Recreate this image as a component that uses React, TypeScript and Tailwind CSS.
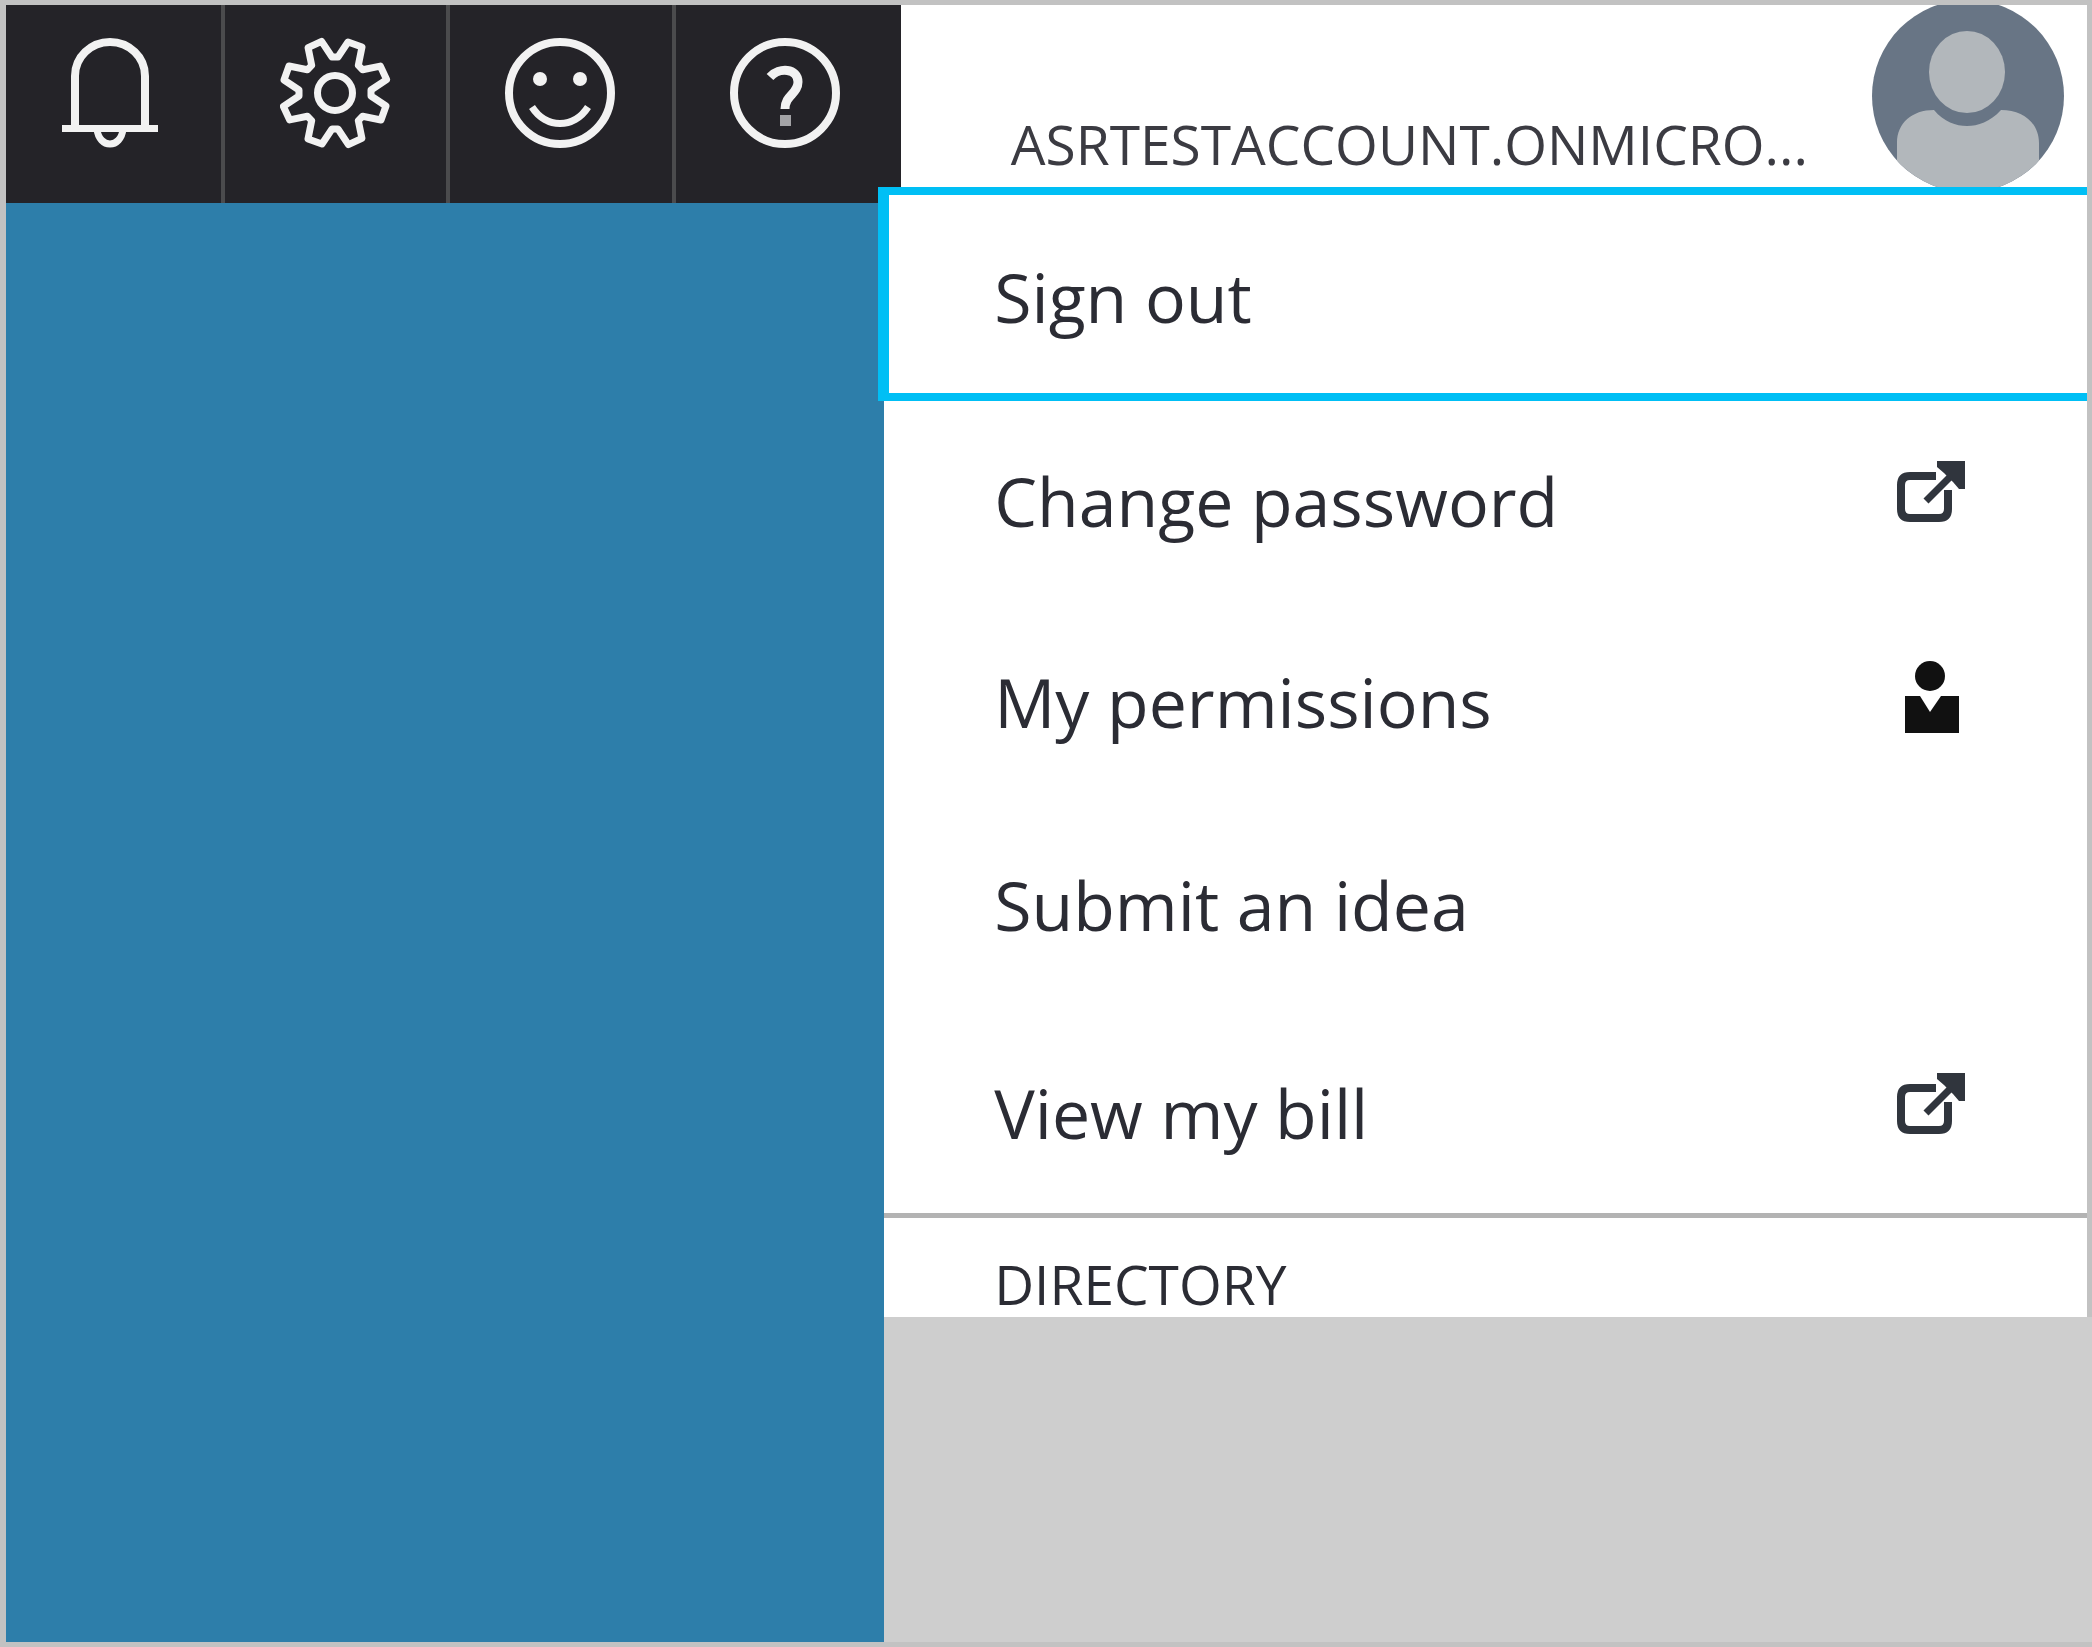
import type { ReactNode } from "react";

const GEAR_ANGLES = [0, 45, 90, 135, 180, 225, 270, 315];

// Outline of the eight-toothed gear: one notch and one tooth per 45° step.
const gearPath =
  GEAR_ANGLES.map((deg, i) => {
    const a = (deg * Math.PI) / 180;
    const points = [
      [-3, -36],
      [3, -36],
      [13, -51],
      [27, -46],
    ];
    return points
      .map(([x, y], j) => {
        const px = x * Math.cos(a) - y * Math.sin(a);
        const py = x * Math.sin(a) + y * Math.cos(a);
        return `${i === 0 && j === 0 ? "M" : "L"}${px.toFixed(1)} ${py.toFixed(1)}`;
      })
      .join(" ");
  }).join(" ") + " Z";

function TopIcon({ children }: { children: ReactNode }) {
  return (
    <svg
      viewBox="-55 -56 112 112"
      className="size-28"
      fill="none"
      stroke="currentColor"
      strokeLinejoin="round"
      aria-hidden="true"
    >
      {children}
    </svg>
  );
}

function BellIcon() {
  return (
    <TopIcon>
      <g transform="translate(-3 0)">
        <path d="M-35 34 V-17 A35 34 0 0 1 35 -17 V34" strokeWidth="8" />
        <path d="M-48 35.500 H48" strokeWidth="7" />
        <path d="M-13 36 C-11 56 11 56 13 36" strokeWidth="7" />
      </g>
    </TopIcon>
  );
}

function GearIcon() {
  return (
    <TopIcon>
      <path d={gearPath} strokeWidth="7" />
      <circle r="17.500" strokeWidth="7" />
    </TopIcon>
  );
}

function SmileIcon() {
  return (
    <TopIcon>
      <circle r="51" strokeWidth="8" />
      <circle cx="-20" cy="-14" r="7" fill="currentColor" stroke="none" />
      <circle cx="20" cy="-14" r="7" fill="currentColor" stroke="none" />
      <path d="M-28 14 C-14 36 14 36 28 14" strokeWidth="7" />
    </TopIcon>
  );
}

function HelpIcon() {
  return (
    <TopIcon>
      <circle r="51" strokeWidth="8" />
      <path d="M-15 -16 C-6 -26 13 -25 13 -11 C13 1 0 2 0 16" strokeWidth="9" />
      <rect x="-5" y="22" width="11" height="11" fill="#a3a3a6" stroke="none" />
    </TopIcon>
  );
}

function Avatar() {
  return (
    <svg viewBox="0 0 192 182" className="h-[182px] w-48 shrink-0" aria-hidden="true">
      <defs>
        <clipPath id="avatar-disc">
          <circle cx="96" cy="91" r="96" />
        </clipPath>
      </defs>
      <g clipPath="url(#avatar-disc)">
        <rect width="192" height="182" fill="#687585" />
        <path
          d="M25 182 V138 C25 118 40 105 62 105 C72 117 84 121 95 121 C106 121 118 117 129 105 C151 105 167 118 167 138 V182 Z"
          fill="#b2b7bb"
        />
        <ellipse cx="95" cy="67" rx="38" ry="41" fill="#b2b7bb" />
      </g>
    </svg>
  );
}

function ExternalIcon() {
  return (
    <svg viewBox="0 -3 72 88" className="h-22 w-18 shrink-0" fill="none" stroke="#30353d" aria-hidden="true">
      <path d="M41 16 H15 Q6 16 6 25 V49 Q6 58 15 58 H44 Q53 58 53 49 V30" strokeWidth="8" />
      <path d="M31 41 L62 10" strokeWidth="7" />
      <path d="M42 1 H70 V29 H64 L58 22 L49 13 L42 7 Z" fill="#30353d" stroke="none" />
    </svg>
  );
}

function PersonIcon() {
  return (
    <svg viewBox="0 -2 72 88" className="h-22 w-18 shrink-0" fill="#111111" aria-hidden="true">
      <circle cx="35" cy="16" r="15" />
      <path d="M10 36 H25 L35 52 L46 36 H64 V73 H10 Z" />
    </svg>
  );
}

const NAV = [
  { label: "Notifications", icon: <BellIcon /> },
  { label: "Settings", icon: <GearIcon /> },
  { label: "Feedback", icon: <SmileIcon /> },
  { label: "Help", icon: <HelpIcon /> },
];

const ITEMS = [
  { label: "Change password", icon: <ExternalIcon /> },
  { label: "My permissions", icon: <PersonIcon /> },
  { label: "Submit an idea", icon: null },
  { label: "View my bill", icon: <ExternalIcon /> },
];

export default function App() {
  return (
    <div className="flex min-h-screen flex-col border-[5px] border-l-[6px] border-[#c2c2c2] bg-white font-['Open_Sans',sans-serif] text-[#2b2c34]">
      <header className="flex h-[198px]">
        <nav className="grid flex-1 grid-cols-[219fr_225fr_225fr_225fr] bg-[#242328] text-[#f2f2f2]">
          {NAV.map((item) => (
            <button
              key={item.label}
              type="button"
              aria-label={item.label}
              className="flex items-start justify-center border-r-4 border-[#4b4b4d] pt-8 last:border-[#242328]"
            >
              {item.icon}
            </button>
          ))}
        </nav>
        <button type="button" className="flex w-[57%] items-start justify-between pr-[23px] pl-[110px]">
          <span className="pt-[103px] text-[55px] leading-[72px] whitespace-nowrap text-[#3b3b42]">
            ASRTESTACCOUNT.ONMICRO...
          </span>
          <Avatar />
        </button>
      </header>

      <div className="flex flex-1">
        <main className="flex-1 bg-[#2d7eaa]" />
        <aside className="relative z-10 -mt-4 flex w-[57.8%] flex-col">
          <div className="flex flex-col bg-white text-[68px] leading-[90px]">
            <button
              type="button"
              className="-ml-[6px] flex h-[214px] items-center border-y-8 border-l-[11px] border-[#00bff5] bg-white pt-[6px] pl-[105px]"
            >
              Sign out
            </button>
            <div className="flex flex-col">
              {ITEMS.map((item) => (
                <button
                  key={item.label}
                  type="button"
                  className="flex h-[203px] items-center justify-between pr-[120px] pl-[110px] first:h-[199px] last:h-[207px] last:pt-[6px]"
                >
                  {item.label}
                  {item.icon}
                </button>
              ))}
            </div>
          </div>
          <h2 className="h-[104px] border-t-[5px] border-[#b3b3b3] bg-white pt-[30px] pl-[110px] text-[55px] leading-[72px]">
            DIRECTORY
          </h2>
          <div className="-mr-[5px] flex-1 bg-[#cecece]" />
        </aside>
      </div>
    </div>
  );
}
